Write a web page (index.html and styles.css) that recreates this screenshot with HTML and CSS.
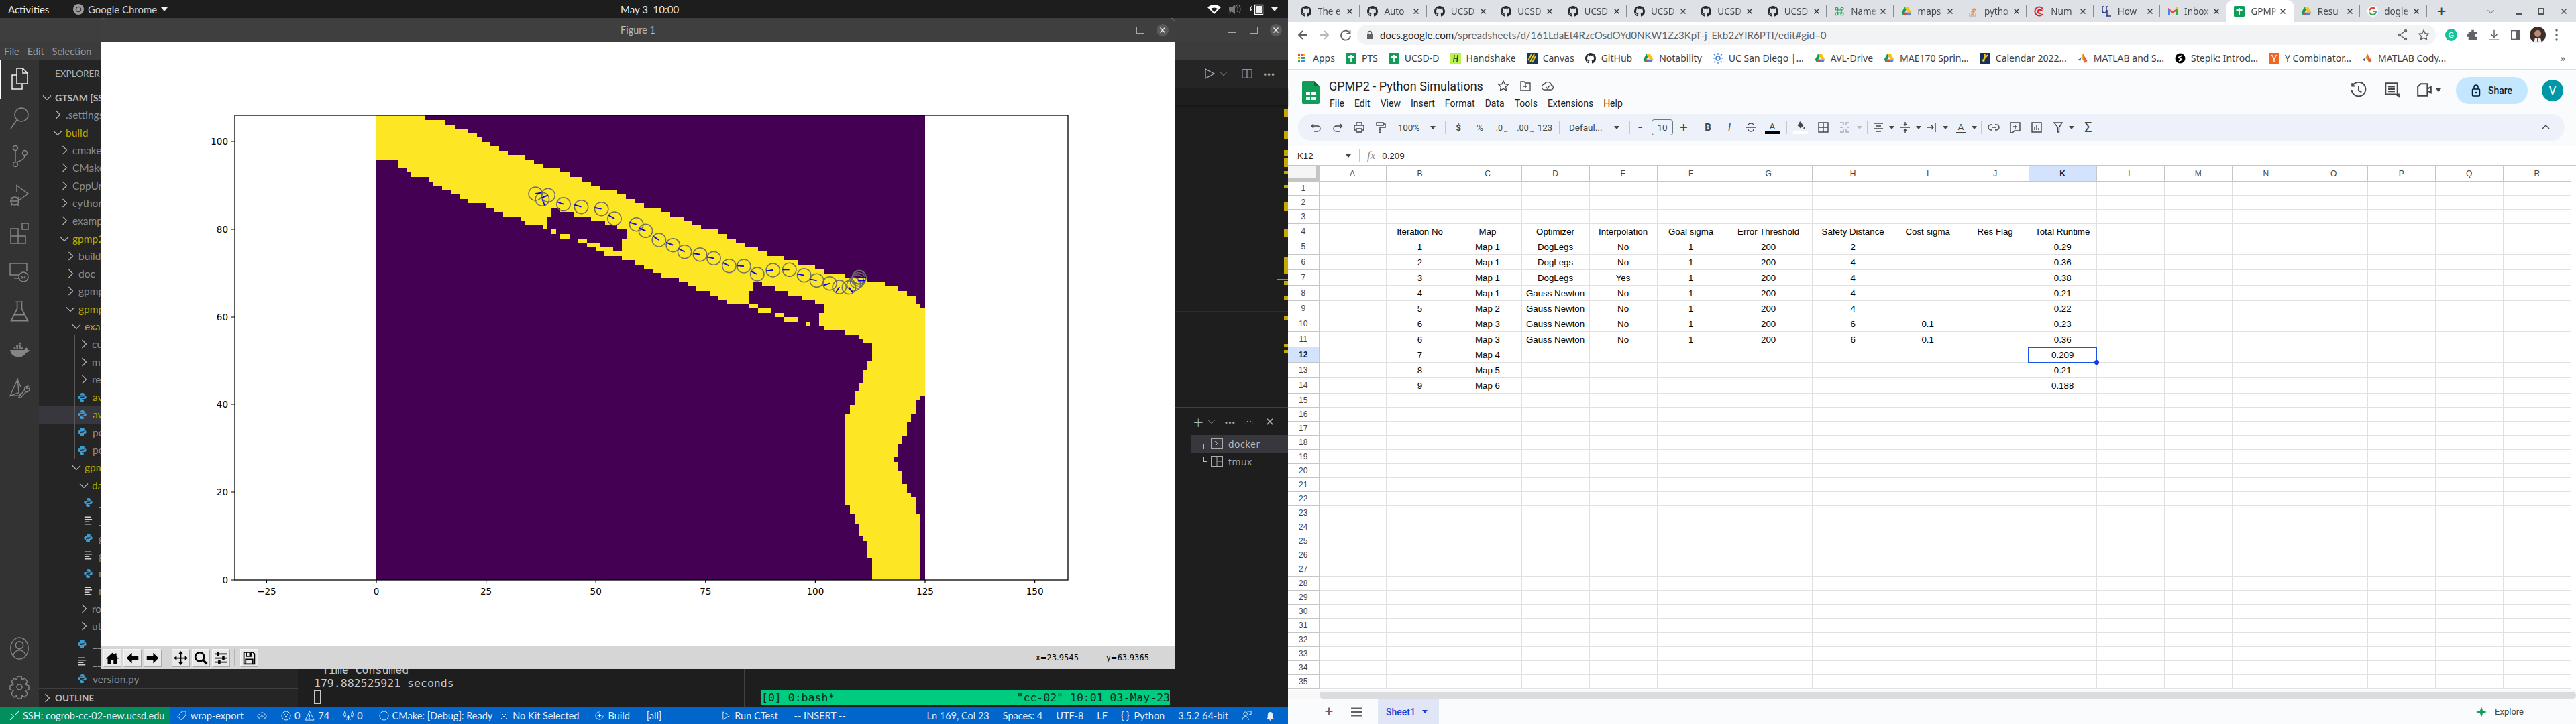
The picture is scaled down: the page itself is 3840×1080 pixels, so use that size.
FILE: index.html
```html
<!DOCTYPE html>
<html lang="en">
<head>
    <meta charset="UTF-8">
    <title>Desktop</title>
    <link rel="stylesheet" href="styles.css">
</head>
<body>
<svg class="defs" aria-hidden="true">
    <symbol id="gh" viewBox="0 0 16 16"><path fill="currentColor" d="M8 0C3.58 0 0 3.58 0 8c0 3.54 2.29 6.53 5.47 7.59.4.07.55-.17.55-.38 0-.19-.01-.82-.01-1.49-2.01.37-2.53-.49-2.69-.94-.09-.23-.48-.94-.82-1.13-.28-.15-.68-.52-.01-.53.63-.01 1.08.58 1.23.82.72 1.21 1.87.87 2.33.66.07-.52.28-.87.51-1.07-1.78-.2-3.64-.89-3.64-3.95 0-.87.31-1.59.82-2.15-.08-.2-.36-1.02.08-2.12 0 0 .67-.21 2.2.82.64-.18 1.32-.27 2-.27s1.36.09 2 .27c1.53-1.04 2.2-.82 2.2-.82.44 1.1.16 1.92.08 2.12.51.56.82 1.27.82 2.15 0 3.07-1.87 3.75-3.65 3.95.29.25.54.73.54 1.48 0 1.07-.01 1.93-.01 2.2 0 .21.15.46.55.38A8.013 8.013 0 0016 8c0-4.42-3.58-8-8-8z"/></symbol>
    <symbol id="drive" viewBox="0 0 24 24"><path fill="#0f9d58" d="M8 2 1 14.5 4.5 21l7-12.5z"/><path fill="#ffc107" d="M8 2h8l7 12.5h-8z"/><path fill="#4285f4" d="M4.5 21h15l3.5-6.5H8z"/><path fill="#ea4335" d="M4.5 21h6l3-6.5H8z"/></symbol>
    <symbol id="gsheet" viewBox="0 0 16 16"><rect width="16" height="16" rx="1.5" fill="#0f9d58"/><path fill="none" stroke="#fff" stroke-width="1.8" d="M8 3v11M3.5 6h9"/></symbol>
    <symbol id="matlab" viewBox="0 0 24 24"><path fill="#e16737" d="M12 2 8 11l5 6 3 5 6-4z"/><path fill="#f8b020" d="M12 2 8 11l5 6z"/><path fill="#1f5fa8" d="M8 11 1 15l5 3z"/></symbol>
    <symbol id="cx" viewBox="0 0 12 12"><path fill="none" stroke="currentColor" stroke-width="1.4" d="M2.5 2.5l7 7M9.5 2.5l-7 7"/></symbol>
    <symbol id="cr" viewBox="0 0 16 16"><path fill="none" stroke="currentColor" stroke-width="1.1" d="M5.5 2l6 6-6 6"/></symbol>
    <symbol id="cd" viewBox="0 0 16 16"><path fill="none" stroke="currentColor" stroke-width="1.1" d="M2 5.5l6 6 6-6"/></symbol>
    <symbol id="py" viewBox="0 0 24 24"><g fill="#3c9bd0"><path id="py-half" d="M12 1.5C8 1.5 8 3.2 8 4.5V7h4.2v1H5.5C3.5 8 2 9.5 2 12s1.4 4 3.3 4H7v-2.4c0-1.9 1.6-3.4 3.5-3.4h4c1.5 0 2.8-1.2 2.8-2.8V4.5c0-1.6-1.5-3-5.3-3z"/><path transform="rotate(180 12 12)" d="M12 1.5C8 1.5 8 3.2 8 4.5V7h4.2v1H5.5C3.5 8 2 9.5 2 12s1.4 4 3.3 4H7v-2.4c0-1.9 1.6-3.4 3.5-3.4h4c1.5 0 2.8-1.2 2.8-2.8V4.5c0-1.6-1.5-3-5.3-3z"/></g></symbol>
    <symbol id="lines" viewBox="0 0 16 16"><path fill="none" stroke="#d0d0d0" stroke-width="1.6" d="M2 2.5h10M2 6.2h12M2 9.8h8M2 13.5h11"/></symbol>
</svg>

<div class="desktop">
    <div class="screen">
        <div class="topbar">
            <span class="activities">Activities</span>
            <span class="appmenu">
                <svg class="appicon" viewBox="0 0 16 16"><circle cx="8" cy="8" r="8" fill="#9a9a9a"/><circle cx="8" cy="8" r="3.6" fill="none" stroke="#333" stroke-width="1.4"/></svg>
                Google Chrome <i class="caret-w"></i>
            </span>
            <span class="clock">May 3&nbsp; 10:00</span>
            <span class="tray">
                <svg viewBox="0 0 20 16" width="20" height="16"><path fill="#fff" d="M0 5q10-8 20 0l-10 10zM5 7q5-3 10 0l-5 5z" fill-rule="evenodd"/></svg>
                <svg viewBox="0 0 20 16" width="20" height="16"><path fill="#777" d="M1 5h4l5-4v14l-5-4H1z"/><path fill="none" stroke="#777" stroke-width="1.2" d="M13 4q3 4 0 8M16 2q4 6 0 12M1 14 14 1"/></svg>
                <svg viewBox="0 0 22 18" width="22" height="18"><path fill="#ddd" d="M4 3 0 9h2l-1 5 4-6H3z"/><rect x="8.5" y="2.5" width="12" height="14" fill="none" stroke="#fff" stroke-width="1.4"/><rect x="10" y="4" width="9" height="11" fill="#eee"/></svg>
                <i class="caret-w"></i>
            </span>
        </div>

        <div class="vscode">
            <div class="wintitle">
                <span class="winbtn min"></span>
                <span class="winbtn max"></span>
                <span class="winbtn close"><svg width="12" height="12"><use href="#cx"/></svg></span>
            </div>
            <div class="menubar"><span>File</span><span>Edit</span><span>Selection</span></div>
            <div class="workbench">
                <div class="activitybar">
                    <div class="act on"><svg viewBox="0 0 26 34"><path d="M9 1h9l7 7v16H9zM18 1v7h7M9 11H2v21h15v-8" /></svg></div>
                    <div class="act"><svg viewBox="0 0 30 34"><circle cx="18" cy="12" r="10"/><path d="M11 20 2 33"/></svg></div>
                    <div class="act"><svg viewBox="0 0 26 34"><circle cx="7" cy="5" r="3.5"/><circle cx="7" cy="29" r="3.5"/><circle cx="21" cy="12" r="3.5"/><path d="M7 9v16M21 16q0 6-12 10"/></svg></div>
                    <div class="act"><svg viewBox="0 0 30 34"><path d="M10 2l18 13-14 10M11 12v-8"/><circle cx="8" cy="26" r="6"/><path d="M2 20l3 3M14 20l-3 3M1 26h14M2 33l3-3M14 33l-3-3"/></svg></div>
                    <div class="act"><svg viewBox="0 0 30 34"><path d="M2 9h11v22H2zM2 20h22v11H13M19 1h9v9h-9z"/></svg></div>
                    <div class="act"><svg viewBox="0 0 30 30"><path d="M15 18H1V1h25v11M7 23h8"/><circle cx="21" cy="21" r="7"/><path d="M18 20l2 2-2 1M24 20l-2 2 2 1"/></svg></div>
                    <div class="act"><svg viewBox="0 0 26 30"><path d="M8 2h10M10 2v9L2 27h22l-8-16V2M6 19h14"/></svg></div>
                    <div class="act"><svg viewBox="0 0 32 24"><path class="solid" d="M1 12h23q1-3 3-4 3 2 3 4 2 .2 2 1-2 3-5 3-4 7-12 7Q3 23 1 12z"/><path class="solid" d="M7 8h3v3H7zM11 8h3v3h-3zM15 8h3v3h-3zM11 4h3v3h-3zM15 4h3v3h-3zM15 0h3v3h-3zM19 8h3v3h-3z"/></svg></div>
                    <div class="act"><svg viewBox="0 0 32 32"><path d="M13 1 1 27l14-5zM13 1l5 12M1 27h14l3-4"/><path d="M15 29l9-11a5 5 0 0 1 6-6l-3 3 2 2 3-2a5 5 0 0 1-6 6l-8 9z"/></svg></div>
                    <div class="act-space"></div>
                    <div class="act"><svg viewBox="0 0 30 36"><ellipse cx="15" cy="18" rx="14" ry="17"/><circle cx="15" cy="13" r="6"/><path d="M5 30q2-9 10-9t10 9"/></svg></div>
                    <div class="act"><svg viewBox="0 0 30 34"><path d="M12 1h6l1 5 4-2 4 5-3 4 5 2v6l-5 1 3 5-4 5-4-3-1 5h-6l-1-5-4 3-4-5 3-5-5-1v-6l5-2-3-4 4-5 4 2z"/><circle cx="15" cy="17" r="4"/></svg></div>
                </div>

                <div class="sidebar">
                    <div class="side-title">EXPLORER</div>
                    <div class="tree">
                        <div class="row d0 root"><svg class="chev"><use href="#cd"/></svg><span>GTSAM [SSH: cogrob]</span></div>
                        <div class="row d1"><svg class="chev"><use href="#cr"/></svg><span>.settings</span></div>
                        <div class="row d1 mod"><svg class="chev"><use href="#cd"/></svg><span>build</span></div>
                        <div class="row d2"><svg class="chev"><use href="#cr"/></svg><span>cmake</span></div>
                        <div class="row d2"><svg class="chev"><use href="#cr"/></svg><span>CMakeFiles</span></div>
                        <div class="row d2"><svg class="chev"><use href="#cr"/></svg><span>CppUnit</span></div>
                        <div class="row d2"><svg class="chev"><use href="#cr"/></svg><span>cython</span></div>
                        <div class="row d2"><svg class="chev"><use href="#cr"/></svg><span>examples</span></div>
                        <div class="row d2 mod"><svg class="chev"><use href="#cd"/></svg><span>gpmp2</span></div>
                        <div class="row d3"><svg class="chev"><use href="#cr"/></svg><span>build</span></div>
                        <div class="row d3"><svg class="chev"><use href="#cr"/></svg><span>doc</span></div>
                        <div class="row d3"><svg class="chev"><use href="#cr"/></svg><span>gpmp2</span></div>
                        <div class="row d3 mod"><svg class="chev"><use href="#cd"/></svg><span>gpmp2_python</span></div>
                        <div class="row d4 mod"><svg class="chev"><use href="#cd"/></svg><span>examples</span></div>
                        <div class="row d5 guide"><svg class="chev"><use href="#cr"/></svg><span>custom</span></div>
                        <div class="row d5 guide"><svg class="chev"><use href="#cr"/></svg><span>maps</span></div>
                        <div class="row d5 guide"><svg class="chev"><use href="#cr"/></svg><span>results</span></div>
                        <div class="row f5 mod guide"><svg class="file"><use href="#py"/></svg><span>avoid.py</span></div>
                        <div class="row f5 mod guide picked"><svg class="file"><use href="#py"/></svg><span>avoid2.py</span></div>
                        <div class="row f5 guide"><svg class="file"><use href="#py"/></svg><span>point.py</span></div>
                        <div class="row f5 guide"><svg class="file"><use href="#py"/></svg><span>point2.py</span></div>
                        <div class="row d4 mod"><svg class="chev"><use href="#cd"/></svg><span>gpmp2_python</span></div>
                        <div class="row d5 mod"><svg class="chev"><use href="#cd"/></svg><span>datasets</span></div>
                        <div class="row f6"><svg class="file"><use href="#py"/></svg><span>__init__.py</span></div>
                        <div class="row f6"><svg class="file"><use href="#lines"/></svg><span>__init__.pyc</span></div>
                        <div class="row f6"><svg class="file"><use href="#py"/></svg><span>generate.py</span></div>
                        <div class="row f6"><svg class="file"><use href="#lines"/></svg><span>generate.pyc</span></div>
                        <div class="row f6"><svg class="file"><use href="#py"/></svg><span>maps.py</span></div>
                        <div class="row f6"><svg class="file"><use href="#lines"/></svg><span>maps.pyc</span></div>
                        <div class="row d5"><svg class="chev"><use href="#cr"/></svg><span>robots</span></div>
                        <div class="row d5"><svg class="chev"><use href="#cr"/></svg><span>utils</span></div>
                        <div class="row f5"><svg class="file"><use href="#py"/></svg><span>__init__.py</span></div>
                        <div class="row f5"><svg class="file"><use href="#lines"/></svg><span>__init__.pyc</span></div>
                        <div class="row f5"><svg class="file"><use href="#py"/></svg><span>version.py</span></div>
                    </div>
                    <div class="outline"><svg class="chev"><use href="#cr"/></svg><span>OUTLINE</span></div>
                </div>

                <div class="main">
                    <div class="tabsrow">
                        <svg class="ed-ico" viewBox="0 0 18 18" width="18" height="18"><path d="M3 2l13 7-13 7z"/></svg>
                        <svg class="ed-small" width="12" height="12"><use href="#cd"/></svg>
                        <svg class="ed-ico split" viewBox="0 0 18 18" width="18" height="16"><rect x="1" y="2" width="16" height="14" rx="1"/><path d="M9 2v14"/></svg>
                        <span class="dots">···</span>
                    </div>
                    <div class="crumbs"></div>
                    <div class="editor">
                        <div class="overview">
                            <i class="mk m1"></i><i class="mk m2"></i><i class="mk m3"></i><i class="mk m4"></i><i class="mk m5"></i><i class="mk m6"></i><i class="mk m7"></i><i class="mk m8"></i><i class="mk m9"></i><i class="mk m10"></i><i class="mk m11"></i><i class="mk m12"></i><i class="mk m13"></i><i class="mk m14"></i>
                        </div>
                    </div>
                    <div class="panel">
                        <div class="panel-head">
                            <span class="plus">+</span>
                            <svg class="pico" width="12" height="12"><use href="#cd"/></svg>
                            <span class="dots pd">···</span>
                            <svg class="pico up" width="14" height="14"><use href="#cd"/></svg>
                            <svg class="pico px" width="14" height="14"><use href="#cx"/></svg>
                        </div>
                        <div class="panel-body">
                            <div class="term">
                                <div class="tl ind">Time Consumed</div>
                                <div class="tl">179.882525921 seconds</div>
                                <div class="tl"><span class="cursor"></span></div>
                            </div>
                            <div class="term tmux">
                                <div class="tmuxbar"><span>[0] 0:bash*</span><span>"cc-02" 10:01 03-May-23</span></div>
                            </div>
                            <div class="termlist">
                                <div class="tt on"><span class="tree-l top"></span><svg viewBox="0 0 18 16" width="18" height="16"><rect x=".5" y=".5" width="17" height="15"/><path d="M6 4l4 4-4 4"/></svg><span>docker</span></div>
                                <div class="tt"><span class="tree-l"></span><svg viewBox="0 0 18 16" width="18" height="16"><rect x=".5" y=".5" width="17" height="15"/><path d="M9 1v14M9 8h8"/></svg><span>tmux</span></div>
                            </div>
                        </div>
                    </div>
                </div>
            </div>
            <div class="statusbar">
                <div class="remote">
                    <svg viewBox="0 0 14 14" width="14" height="14"><path d="M1 13l5-5-3-3M13 1L8 6"/></svg>
                    <span>SSH: cogrob-cc-02-new.ucsd.edu</span>
                </div>
                <div class="st s-branch"><svg viewBox="0 0 16 16"><path d="M8 1h6v6l-7 8-6-6z"/></svg><span>wrap-export</span></div>
                <div class="st s-cloud"><svg viewBox="0 0 16 16"><path d="M5 12H4a3 3 0 0 1 0-6 4.500 4.500 0 0 1 8.500 0 3 3 0 0 1-1 6H11M8 15V8M5.500 10 8 7.500 10.500 10"/></svg></div>
                <div class="st s-err"><svg viewBox="0 0 16 16"><circle cx="8" cy="8" r="7"/><path d="M5.500 5.500l5 5M10.500 5.500l-5 5"/></svg><span>0</span></div>
                <div class="st s-warn"><svg viewBox="0 0 16 16"><path d="M8 1l7 14H1zM8 6v5M8 12v1.500"/></svg><span>74</span></div>
                <div class="st s-radio"><svg viewBox="0 0 16 16"><path d="M8 8v7M8 8 5 15M8 8l3 7M4 3q-2 3 0 6M12 3q2 3 0 6M2 1q-3 5 0 10M14 1q3 5 0 10"/></svg><span>0</span></div>
                <div class="st s-info"><svg viewBox="0 0 16 16"><circle cx="8" cy="8" r="7"/><path d="M8 7v5M8 4v1.500"/></svg><span>CMake: [Debug]: Ready</span></div>
                <div class="st s-kit"><svg viewBox="0 0 16 16"><path d="M3 3l10 10M13 3 3 13"/></svg><span>No Kit Selected</span></div>
                <div class="st s-build"><svg viewBox="0 0 16 16"><path d="M8 2a6 6 0 1 0 6 6M8 5v6M5 8h6"/></svg><span>Build</span></div>
                <div class="st s-all"><span>[all]</span></div>
                <div class="st s-run"><svg viewBox="0 0 16 16"><path d="M3 2l10 6-10 6z"/></svg><span>Run CTest</span></div>
                <div class="st s-ins"><span>-- INSERT --</span></div>
                <div class="st-space"></div>
                <div class="st s-ln"><span>Ln 169, Col 23</span></div>
                <div class="st s-sp"><span>Spaces: 4</span></div>
                <div class="st s-enc"><span>UTF-8</span></div>
                <div class="st s-lf"><span>LF</span></div>
                <div class="st s-py"><span>{ }</span><span class="lang">Python</span></div>
                <div class="st s-ver"><span>3.5.2 64-bit</span></div>
                <div class="st s-fb"><svg viewBox="0 0 16 16"><circle cx="6" cy="5" r="3"/><path d="M1 15q1-6 5-6t5 6M9 1h6v5h-3"/></svg></div>
                <div class="st s-bell"><svg viewBox="0 0 16 16"><path class="solid" d="M8 2q4 0 4 5v4l2 2H2l2-2V7q0-5 4-5zM6 14h4l-2 2z"/></svg></div>
            </div>
        </div>

        <div class="figure">
            <div class="figtitle">
                <span>Figure 1</span>
                <span class="winbtn fig-min"></span>
                <span class="winbtn max"></span>
                <span class="winbtn close"><svg width="12" height="12"><use href="#cx"/></svg></span>
            </div>
            <svg class="plot" viewBox="150 63 1601 901" width="1601" height="901">
                <rect x="561" y="172" width="818" height="693" fill="#440154"/>
                <g class="map-y" fill="#fde725">
                    <polygon points="561,172 633,172 633,179 641,179 641,271 641,264 613,264 613,257 607,257 607,251 594,251 594,238 561,238"/>
                    <g transform="translate(640,150) scale(.5102,.33333)">
                        <polygon points="0,87 48,87 48,107 76,107 76,125 114,125 114,147 140,147 140,165 153,165 153,185 178,185 178,204 204,204 204,225 229,225 229,243 280,243 280,264 306,264 306,282 331,282 331,303 382,303 382,321 410,321 410,342 447,342 447,363 472,363 472,381 498,381 498,402 549,402 549,420 575,420 575,441 602,441 602,459 627,459 627,480 678,480 678,498 704,498 704,519 743,519 743,537 768,537 768,558 794,558 794,576 845,576 845,597 870,597 870,618 896,618 896,636 921,636 921,657 960,657 960,675 986,675 986,696 1037,696 1037,714 1076,714 1076,735 1127,735 1127,753 1152,753 1152,774 1215,774 1215,792 1280,792 1280,813 1331,813 1331,831 1370,831 1370,852 1396,852 1396,873 1421,873 1421,912 1435,912 1435,930 1448,930 1448,1200 1280,1200 1280,1167 1294,1167 1294,1086 1268,1086 1268,1068 1254,1068 1254,1047 1215,1047 1215,1029 1152,1029 1152,1008 1139,1008 1139,951 1152,951 1152,912 1127,912 1127,891 1088,891 1088,873 1049,873 1049,852 1011,852 1011,831 972,831 972,813 947,813 947,852 935,852 935,912 870,912 870,891 845,891 845,873 819,873 819,852 780,852 780,831 755,831 755,813 729,813 729,792 678,792 678,771 653,771 653,753 627,753 627,735 602,735 602,714 563,714 563,618 576,618 576,576 549,576 549,558 513,558 513,537 472,537 472,519 421,519 421,498 382,498 382,480 357,480 357,519 345,519 345,576 331,576 331,558 280,558 280,537 268,537 268,519 216,519 216,498 190,498 190,480 165,480 165,459 114,459 114,441 88,441 88,420 63,420 63,402 37,402 37,381 12,381 12,363 0,363"/>
                        <rect x="357" y="576" width="13" height="21"/>
                        <rect x="382" y="597" width="28" height="21"/>
                        <rect x="435" y="618" width="25" height="18"/>
                        <rect x="460" y="636" width="38" height="21"/>
                        <rect x="486" y="657" width="51" height="18"/>
                        <rect x="512" y="675" width="52" height="21"/>
                        <rect x="935" y="912" width="25" height="18"/>
                        <rect x="960" y="930" width="38" height="21"/>
                        <rect x="1011" y="951" width="26" height="18"/>
                        <rect x="1037" y="969" width="39" height="21"/>
                        <rect x="1102" y="990" width="11" height="18"/>
                    </g>
                    <g transform="translate(1100,350) scale(.33333)">
                        <polygon points="579,590 837,590 837,722 816,722 816,741 795,741 795,801 774,801 774,840 756,840 756,900 735,900 735,939 717,939 717,996 696,996 696,1017 717,1017 717,1056 735,1056 735,1116 756,1116 756,1155 774,1155 774,1173 795,1173 795,1251 816,1251 816,1545 600,1545 600,1449 579,1449 579,1371 561,1371 561,1350 540,1350 540,1293 522,1293 522,1251 501,1251 501,1212 480,1212 480,801 501,801 501,762 522,762 522,702 540,702 540,663 561,663 561,606 579,606"/>
                    </g>
                </g>
                <g transform="translate(640,150) scale(.5102,.33333)">
                    <g class="robot">
                        <ellipse cx="310" cy="417" rx="20" ry="30"/><ellipse cx="347" cy="424" rx="20" ry="30"/><ellipse cx="330" cy="442" rx="20" ry="30"/><ellipse cx="392" cy="464" rx="20" ry="30"/><ellipse cx="444" cy="476" rx="20" ry="30"/><ellipse cx="503" cy="485" rx="20" ry="30"/><ellipse cx="541" cy="528" rx="20" ry="30"/><ellipse cx="605" cy="554" rx="20" ry="30"/><ellipse cx="632" cy="583" rx="20" ry="30"/><ellipse cx="671" cy="624" rx="20" ry="30"/><ellipse cx="712" cy="647" rx="20" ry="30"/><ellipse cx="746" cy="677" rx="20" ry="30"/><ellipse cx="791" cy="689" rx="20" ry="30"/><ellipse cx="831" cy="706" rx="20" ry="30"/><ellipse cx="876" cy="740" rx="20" ry="30"/><ellipse cx="919" cy="741" rx="20" ry="30"/><ellipse cx="958" cy="777" rx="20" ry="30"/><ellipse cx="1004" cy="759" rx="20" ry="30"/><ellipse cx="1052" cy="757" rx="20" ry="30"/><ellipse cx="1095" cy="782" rx="20" ry="30"/><ellipse cx="1132" cy="805" rx="20" ry="30"/><ellipse cx="1170" cy="818" rx="20" ry="30"/><ellipse cx="1198" cy="834" rx="20" ry="30"/><ellipse cx="1226" cy="836" rx="20" ry="30"/><ellipse cx="1240" cy="822" rx="20" ry="30"/><ellipse cx="1250" cy="810" rx="20" ry="30"/><ellipse cx="1254" cy="800" rx="20" ry="30"/><ellipse cx="1256" cy="792" rx="20" ry="30"/><ellipse cx="1256" cy="790" rx="20" ry="30"/>
                    </g>
                    <path class="heading" d="M310 417l18-4M347 424l-20 12M330 442l7 28M372 453l20 11M424 467l20 9M483 480l20 5M523 512l18 16M585 545l20 9M614 571l18 12M653 606l18 18M692 635l20 12M728 663l18 14M771 684l20 5M811 700l20 6M858 726l18 14M899 739l20 2M939 763l19 14M984 763l20-4M1032 757h20M1075 776l20 6M1112 799l20 6M1152 827l18-9M1188 858l10-24M1238 860l-12-24M1252 806h20M1252 793l24-3"/>
                </g>
                <rect class="axes" x="350" y="172" width="1242" height="693"/>
                <path class="ticks" d="M397.400 865v5M561 865v5M724.600 865v5M888.200 865v5M1051.800 865v5M1215.400 865v5M1379 865v5M1542.600 865v5M350 865h-5M350 734h-5M350 603h-5M350 473h-5M350 342h-5M350 211h-5"/>
                <g class="ticklabels xt">
                    <text x="397.400" y="887">−25</text><text x="561" y="887">0</text><text x="724.600" y="887">25</text><text x="888.200" y="887">50</text><text x="1051.800" y="887">75</text><text x="1215.400" y="887">100</text><text x="1379" y="887">125</text><text x="1542.600" y="887">150</text>
                </g>
                <g class="ticklabels yt">
                    <text x="340" y="870">0</text><text x="340" y="739">20</text><text x="340" y="608">40</text><text x="340" y="478">60</text><text x="340" y="347">80</text><text x="340" y="216">100</text>
                </g>
            </svg>
            <div class="figbar">
                <button class="mb"><svg viewBox="0 0 24 24"><path class="k" d="M12 3 1 13h3v9h6v-6h4v6h6v-9h3l-4-4V4h-3v2z"/></svg></button>
                <button class="mb"><svg viewBox="0 0 24 24"><path class="k" d="M11 3 2 12l9 9v-6h11V9H11z"/></svg></button>
                <button class="mb"><svg viewBox="0 0 24 24"><path class="k" d="M13 3l9 9-9 9v-6H2V9h11z"/></svg></button>
                <span class="mb-sep"></span>
                <button class="mb"><svg viewBox="0 0 24 24"><path class="k" d="M12 0l4 5h-3v6h6V8l5 4-5 4v-3h-6v6h3l-4 5-4-5h3v-6H5v3l-5-4 5-4v3h6V5H8z"/></svg></button>
                <button class="mb"><svg viewBox="0 0 24 24"><circle cx="10" cy="10" r="7.500" fill="none" stroke="#000" stroke-width="3"/><path stroke="#000" stroke-width="4" d="M15 15l7 7"/></svg></button>
                <button class="mb"><svg viewBox="0 0 24 24"><path stroke="#000" stroke-width="2" d="M2 5h20M2 12h20M2 19h20"/><path class="k" d="M5 2h4v6H5zM14 9h4v6h-4zM7 16h4v6H7z"/></svg></button>
                <span class="mb-sep"></span>
                <button class="mb"><svg viewBox="0 0 24 24"><path fill="none" stroke="#000" stroke-width="2" d="M3 2h15l3 3v17H3zM7 2v7h9V2M6 22v-8h12v8"/><path class="k" d="M12 3h3v5h-3z"/></svg></button>
                <span class="coords">x=23.9545</span>
                <span class="coords cy">y=63.9365</span>
            </div>
        </div>
    </div>

    <div class="chrome">
        <div class="tabstrip">
            <div class="tab"><svg class="fav"><use href="#gh"/></svg><span class="tt-name">The e</span><svg class="tx"><use href="#cx"/></svg></div>
            <div class="tab"><svg class="fav"><use href="#gh"/></svg><span class="tt-name">Auto</span><svg class="tx"><use href="#cx"/></svg></div>
            <div class="tab"><svg class="fav"><use href="#gh"/></svg><span class="tt-name">UCSD</span><svg class="tx"><use href="#cx"/></svg></div>
            <div class="tab"><svg class="fav"><use href="#gh"/></svg><span class="tt-name">UCSD</span><svg class="tx"><use href="#cx"/></svg></div>
            <div class="tab"><svg class="fav"><use href="#gh"/></svg><span class="tt-name">UCSD</span><svg class="tx"><use href="#cx"/></svg></div>
            <div class="tab"><svg class="fav"><use href="#gh"/></svg><span class="tt-name">UCSD</span><svg class="tx"><use href="#cx"/></svg></div>
            <div class="tab"><svg class="fav"><use href="#gh"/></svg><span class="tt-name">UCSD</span><svg class="tx"><use href="#cx"/></svg></div>
            <div class="tab"><svg class="fav"><use href="#gh"/></svg><span class="tt-name">UCSD</span><svg class="tx"><use href="#cx"/></svg></div>
            <div class="tab"><svg class="fav" viewBox="0 0 16 16"><path fill="none" stroke="#1a9f5a" stroke-width="1.2" d="M3 6h10M3 10h10M5 6a2 2 0 1 0-2 0M11 6a2 2 0 1 1 2 0M5 10a2 2 0 1 1-2 0M11 10a2 2 0 1 0 2 0M5 4v8M11 4v8"/></svg><span class="tt-name">Name</span><svg class="tx"><use href="#cx"/></svg></div>
            <div class="tab"><svg class="fav"><use href="#drive"/></svg><span class="tt-name">maps</span><svg class="tx"><use href="#cx"/></svg></div>
            <div class="tab"><svg class="fav" viewBox="0 0 16 16"><path fill="none" stroke="#bcbbbb" stroke-width="1.4" d="M3 10v5h9v-5"/><path fill="none" stroke="#f48024" stroke-width="1.4" d="M5 13h5M5 10.500l5 .5M5.500 8l5 1.500M7 5l4 3M9 2.500l3 4"/></svg><span class="tt-name">pytho</span><svg class="tx"><use href="#cx"/></svg></div>
            <div class="tab"><svg class="fav" viewBox="0 0 16 16"><path fill="none" stroke="#e0242a" stroke-width="2" d="M13 12A6.500 6.500 0 1 1 13 4M5 8q3-4 6-2-4 1-6 2 2 4 6 3"/></svg><span class="tt-name">Num</span><svg class="tx"><use href="#cx"/></svg></div>
            <div class="tab"><svg class="fav" viewBox="0 0 16 16"><path fill="none" stroke="#2b3a82" stroke-width="1.5" d="M2 1v6q0 3 3 3t3-3V1M1 1h3M7 1h3M9 7v8h6M8 15h3M8 7h3"/></svg><span class="tt-name">How</span><svg class="tx"><use href="#cx"/></svg></div>
            <div class="tab"><svg class="fav" viewBox="0 0 16 16"><path fill="#ea4335" d="M1 3l7 5 7-5v3L8 11 1 6z"/><path fill="#4285f4" d="M1 4h3v10H1z"/><path fill="#34a853" d="M12 4h3v10h-3z"/><path fill="#fbbc04" d="M13 2h2v2h-2z"/></svg><span class="tt-name">Inbox</span><svg class="tx"><use href="#cx"/></svg></div>
            <div class="tab active"><svg class="fav"><use href="#gsheet"/></svg><span class="tt-name">GPMP</span><svg class="tx"><use href="#cx"/></svg></div>
            <div class="tab"><svg class="fav"><use href="#drive"/></svg><span class="tt-name">Resu</span><svg class="tx"><use href="#cx"/></svg></div>
            <div class="tab last"><svg class="fav" viewBox="0 0 16 16"><circle cx="8" cy="8" r="8" fill="#fff"/><path fill="none" stroke="#4285f4" stroke-width="2.200" d="M8 8h5a5 5 0 0 1-1.500 3.600"/><path fill="none" stroke="#34a853" stroke-width="2.200" d="M11.500 11.600A5 5 0 0 1 3.500 10"/><path fill="none" stroke="#fbbc04" stroke-width="2.200" d="M3.500 10a5 5 0 0 1 0-4"/><path fill="none" stroke="#ea4335" stroke-width="2.200" d="M3.500 6a5 5 0 0 1 8-2"/></svg><span class="tt-name">dogle</span><svg class="tx"><use href="#cx"/></svg></div>
            <span class="newtab">+</span>
            <span class="tab-space"></span>
            <svg class="wc wc-down"><use href="#cd"/></svg>
            <span class="wc-min"></span>
            <span class="wc-max"></span>
            <svg class="wc wc-x"><use href="#cx"/></svg>
        </div>

        <div class="addrrow">
            <svg class="nav" viewBox="0 0 18 18"><path d="M16 9H3M9 3 3 9l6 6"/></svg>
            <svg class="nav off" viewBox="0 0 18 18"><path d="M2 9h13M9 3l6 6-6 6"/></svg>
            <svg class="nav" viewBox="0 0 18 18"><path d="M15 6a7 7 0 1 0 1 4M15.500 2v5h-5"/></svg>
            <div class="omnibox">
                <svg class="lock" viewBox="0 0 12 14"><path fill="#5f6368" d="M2 6h8v7H2z"/><path fill="none" stroke="#5f6368" stroke-width="1.400" d="M3.500 6V4a2.500 2.500 0 0 1 5 0v2"/></svg>
                <span class="url"><b>docs.google.com</b>/spreadsheets/d/161LdaEt4RzcOsdOYd0NKW1Zz3KpT-j_Ekb2zYIR6PTI/edit#gid=0</span>
                <span class="tab-space"></span>
                <svg class="nav sm" viewBox="0 0 18 18"><path d="M14 3 5 9l9 6"/><circle cx="14" cy="3" r="1.500"/><circle cx="14" cy="15" r="1.500"/><circle cx="5" cy="9" r="1.500"/></svg>
                <svg class="nav sm" viewBox="0 0 18 18"><path d="M9 2l2.200 4.600 5 .7-3.600 3.500.9 5L9 13.400l-4.500 2.400.9-5L1.800 7.300l5-.7z"/></svg>
            </div>
            <svg class="ext" viewBox="0 0 20 20"><circle cx="10" cy="10" r="10" fill="#15c39a"/><text x="10" y="14.500" text-anchor="middle" class="grammarly">G</text></svg>
            <svg class="ext" viewBox="0 0 20 20"><path fill="#5f6368" d="M8 2h4v3h5v4h-2a2 2 0 0 0 0 4h2v5H3v-5H1V9h2V5h5z"/></svg>
            <svg class="ext nav" viewBox="0 0 20 20"><path d="M10 2v11M5 9l5 5 5-5M2 18h16"/></svg>
            <svg class="ext nav" viewBox="0 0 20 20"><rect x="3" y="3" width="14" height="14"/><path class="side" d="M11 3h6v14h-6z"/></svg>
            <svg class="ext face" viewBox="0 0 24 24"><circle cx="12" cy="12" r="12" fill="#3c2f2a"/><circle cx="12" cy="10" r="5" fill="#b98a74"/><path fill="#eee" d="M8 16h8l2 8H6z"/><path fill="#c33" d="M11 17h2v5h-2z"/></svg>
            <svg class="ext vdots" viewBox="0 0 6 20"><circle cx="3" cy="3" r="1.700"/><circle cx="3" cy="10" r="1.700"/><circle cx="3" cy="17" r="1.700"/></svg>
        </div>

        <div class="bookmarks">
            <div class="bm"><svg class="fav" viewBox="0 0 16 16"><path fill="#ea4335" d="M2 2h3v3H2zM6 2h3v3H6z"/><path fill="#fbbc04" d="M10 2h3v3h-3zM2 6h3v3H2z"/><path fill="#34a853" d="M6 6h3v3H6zM10 6h3v3h-3zM2 10h3v3H2z"/><path fill="#4285f4" d="M6 10h3v3H6zM10 10h3v3h-3z"/></svg><span>Apps</span></div>
            <div class="bm"><svg class="fav"><use href="#gsheet"/></svg><span>PTS</span></div>
            <div class="bm"><svg class="fav"><use href="#gsheet"/></svg><span>UCSD-D</span></div>
            <div class="bm"><svg class="fav" viewBox="0 0 16 16"><rect width="16" height="16" fill="#b8f24a"/><path stroke="#333" stroke-width="1.500" d="M6 3 5 13M11 3l-1 10M5 8h5"/></svg><span>Handshake</span></div>
            <div class="bm"><svg class="fav" viewBox="0 0 16 16"><rect width="16" height="16" fill="#0f3b63"/><path stroke="#f2c318" stroke-width="2" d="M5 13l6-11M8 14l5-9M2 11l5-9"/></svg><span>Canvas</span></div>
            <div class="bm"><svg class="fav"><use href="#gh"/></svg><span>GitHub</span></div>
            <div class="bm"><svg class="fav"><use href="#drive"/></svg><span>Notability</span></div>
            <div class="bm"><svg class="fav" viewBox="0 0 16 16"><circle cx="8" cy="8" r="3" fill="none" stroke="#3a7fe0" stroke-width="1.500"/><path stroke="#3a7fe0" stroke-width="1.200" d="M8 0v3M8 13v3M0 8h3M13 8h3M2 2l2 2M12 12l2 2M14 2l-2 2M2 14l2-2"/></svg><span>UC San Diego |...</span></div>
            <div class="bm"><svg class="fav"><use href="#drive"/></svg><span>AVL-Drive</span></div>
            <div class="bm"><svg class="fav"><use href="#drive"/></svg><span>MAE170 Sprin...</span></div>
            <div class="bm"><svg class="fav" viewBox="0 0 16 16"><rect width="16" height="16" fill="#14305e"/><path stroke="#f2c318" stroke-width="2" fill="none" d="M4 12l8-9M8 2 6 14"/></svg><span>Calendar 2022...</span></div>
            <div class="bm"><svg class="fav"><use href="#matlab"/></svg><span>MATLAB and S...</span></div>
            <div class="bm"><svg class="fav" viewBox="0 0 16 16"><circle cx="8" cy="8" r="7.500"/><path fill="none" stroke="#fff" stroke-width="2" d="M10.500 4 6 6.500 10 10 6 12"/></svg><span>Stepik: Introd...</span></div>
            <div class="bm"><svg class="fav" viewBox="0 0 16 16"><rect width="16" height="16" fill="#f26522"/><path stroke="#fff" fill="none" stroke-width="1.400" d="M4.500 3 8 9l3.500-6M8 9v4.500"/></svg><span>Y Combinator...</span></div>
            <div class="bm"><svg class="fav"><use href="#matlab"/></svg><span>MATLAB Cody...</span></div>
            <span class="tab-space"></span>
            <span class="bm-more">»</span>
        </div>

        <div class="sheets">
            <div class="docbar">
                <svg class="docicon" viewBox="0 0 26 34"><path fill="#0f9d58" d="M2 0h16l8 8v24a2 2 0 0 1-2 2H2a2 2 0 0 1-2-2V2a2 2 0 0 1 2-2z"/><path fill="#0a6b3c" d="M18 0l8 8h-8z"/><path fill="#fff" d="M6 16h14v12H6z"/><path stroke="#0f9d58" stroke-width="2" d="M13 16v12M6 22h14"/></svg>
                <div class="docinfo">
                    <div class="docname"><span class="doctitle">GPMP2 - Python Simulations</span>
                        <svg class="di" viewBox="0 0 18 18"><path d="M9 2l2.200 4.600 5 .7-3.600 3.500.9 5L9 13.400l-4.500 2.400.9-5L1.800 7.300l5-.7z"/></svg>
                        <svg class="di" viewBox="0 0 18 18"><path d="M2 3h5l2 2h7v11H2zM6 10h6M9 7v6"/></svg>
                        <svg class="di" viewBox="0 0 18 18"><path d="M5 15a4 4 0 0 1-1-8 5.500 5.500 0 0 1 10.500 1A3.500 3.500 0 0 1 13 15zM6.500 11l2 2 3.500-4"/></svg>
                    </div>
                    <div class="docmenu"><span>File</span><span>Edit</span><span>View</span><span>Insert</span><span>Format</span><span>Data</span><span>Tools</span><span>Extensions</span><span>Help</span></div>
                </div>
                <span class="tab-space"></span>
                <svg class="hd" viewBox="0 0 22 22"><path d="M3 5a9.500 9.500 0 1 1-1.500 6M2 2v4h4M11 6v6l4 2"/></svg>
                <svg class="hd" viewBox="0 0 22 22"><path d="M3 2h16v15h2v3l-4-3H3zM6.500 7h9M6.500 10h9M6.500 13h9"/></svg>
                <svg class="hd meet" viewBox="0 0 22 22"><path d="M2 7l4-4h9v16H2zM15 10l5-3v8l-5-3"/></svg>
                <i class="caret-g mc"></i>
                <div class="share"><svg viewBox="0 0 14 18" width="14" height="18"><rect x="1.500" y="7" width="11" height="10" rx="1" fill="none" stroke="#001d35" stroke-width="1.500"/><path d="M4 7V4a3 3 0 0 1 6 0v3" fill="none" stroke="#001d35" stroke-width="1.500"/><circle cx="7" cy="12" r="1.300" fill="#001d35"/></svg><span>Share</span></div>
                <div class="avatar">V</div>
            </div>
            <div class="toolbar">
                <span class="tb"><svg viewBox="0 0 18 18"><path d="M5 4 2.500 7 5 10M3 7h8a4 4 0 0 1 0 8H6"/></svg></span>
                <span class="tb"><svg viewBox="0 0 18 18"><path d="M13 4l2.500 3L13 10M15 7H7a4 4 0 0 0 0 8h5"/></svg></span>
                <span class="tb"><svg viewBox="0 0 18 18"><path d="M5 6V2h8v4M5 13H2V6h14v7h-3M5 11h8v5H5z"/></svg></span>
                <span class="tb"><svg viewBox="0 0 18 18"><path d="M3 2h10v4H3zM13 4h3v5H8v3M7 12h2v5H7z"/></svg></span>
                <span class="tb t w52">100%</span><span class="tb w20"><i class="caret-g"></i></span>
                <span class="sep s1"></span>
                <span class="tb t bold">$</span><span class="tb t">%</span>
                <span class="tb t w26 dec">.0<sub>←</sub></span><span class="tb t w44 dec">.00<sub>→</sub></span><span class="tb t w22">123</span>
                <span class="sep s2"></span>
                <span class="tb t w61">Defaul...</span><span class="tb w20"><i class="caret-g"></i></span>
                <span class="sep s3"></span>
                <span class="tb t w30">−</span><span class="fontsize">10</span><span class="tb t big">+</span>
                <span class="sep s0"></span>
                <span class="tb t bold ml3 fmt">B</span><span class="tb t fmt ital">I</span>
                <span class="tb"><svg viewBox="0 0 18 18"><path d="M2 9h14M5 6a4 3 0 0 1 8 0M5 12a4 3 0 0 0 8 0"/></svg></span>
                <span class="tb color"><span>A</span><i class="bar black"></i></span>
                <span class="sep s4"></span>
                <span class="tb color ml4"><svg viewBox="0 0 18 16"><path class="solid" d="M8 0l6 7-5 5-5-5z"/><path class="solid" d="M15 9q2 3 0 4-2-1 0-4z"/></svg><i class="bar white"></i></span>
                <span class="tb ml2"><svg viewBox="0 0 18 18"><path d="M2 2h14v14H2zM9 2v14M2 9h14"/></svg></span>
                <span class="tb dim"><svg viewBox="0 0 18 18"><path d="M2 2h5v4M16 2h-5v4M2 16h5v-4M16 16h-5v-4M2 9h4M12 9h4"/></svg></span>
                <span class="tb w12"><i class="caret-g faint"></i></span>
                <span class="sep s5"></span>
                <span class="tb"><svg viewBox="0 0 18 18"><path d="M2 3h14M5 7h8M2 11h14M5 15h8"/></svg></span><span class="tb w8"><i class="caret-g"></i></span>
                <span class="tb"><svg viewBox="0 0 18 18"><path d="M2 9h14M9 1v5M7 4l2 2 2-2M9 17v-5M7 14l2-2 2 2"/></svg></span><span class="tb w8"><i class="caret-g"></i></span>
                <span class="tb"><svg viewBox="0 0 18 18"><path d="M14 2v14M2 9h8M8 6l3 3-3 3"/></svg></span><span class="tb w8"><i class="caret-g"></i></span>
                <span class="tb ml3 color"><span>A</span><i class="bar thin"></i></span><span class="tb w8"><i class="caret-g"></i></span>
                <span class="sep s6"></span>
                <span class="tb ml2"><svg viewBox="0 0 18 18"><path d="M7 5H5a4 4 0 0 0 0 8h2M11 5h2a4 4 0 0 1 0 8h-2M6 9h6"/></svg></span>
                <span class="tb"><svg viewBox="0 0 18 18"><path d="M2 2h14v12h-8l-3 3H2zM9 5v6M6 8h6"/></svg></span>
                <span class="tb"><svg viewBox="0 0 18 18"><path d="M2 2h14v14H2zM6 13V9M9 13V5M12 13v-3"/></svg></span>
                <span class="tb"><svg viewBox="0 0 18 18"><path d="M3 2h12l-4.500 7v7h-2V9z"/></svg></span><span class="tb w8"><i class="caret-g"></i></span>
                <span class="tb ml5 t big">Σ</span>
                <span class="tab-space"></span>
                <span class="tb"><svg viewBox="0 0 18 18"><path d="M4 11l5-5 5 5"/></svg></span>
            </div>
            <div class="formula">
                <span class="namebox">K12</span><i class="caret-g"></i>
                <span class="fx-sep"></span>
                <span class="fx">fx</span>
                <span class="fx-val">0.209</span>
            </div>
            <div class="gridwrap">
                <table class="grid">
                    <colgroup>
                        <col class="c-h"><col class="c-a"><col><col><col><col><col><col class="c-g"><col class="c-gh"><col><col class="c-a"><col><col><col><col><col><col><col><col>
                    </colgroup>
                    <tr class="colhead"><th class="corner"></th><th>A</th><th>B</th><th>C</th><th>D</th><th>E</th><th>F</th><th>G</th><th>H</th><th>I</th><th>J</th><th class="hl">K</th><th>L</th><th>M</th><th>N</th><th>O</th><th>P</th><th>Q</th><th>R</th></tr>
                    <tr><th>1</th><td></td><td></td><td></td><td></td><td></td><td></td><td></td><td></td><td></td><td></td><td></td><td></td><td></td><td></td><td></td><td></td><td></td><td></td></tr>
                    <tr><th>2</th><td></td><td></td><td></td><td></td><td></td><td></td><td></td><td></td><td></td><td></td><td></td><td></td><td></td><td></td><td></td><td></td><td></td><td></td></tr>
                    <tr><th>3</th><td></td><td></td><td></td><td></td><td></td><td></td><td></td><td></td><td></td><td></td><td></td><td></td><td></td><td></td><td></td><td></td><td></td><td></td></tr>
                    <tr class="tall"><th>4</th><td></td><td>Iteration No</td><td>Map</td><td>Optimizer</td><td>Interpolation</td><td>Goal sigma</td><td>Error Threshold</td><td>Safety Distance</td><td>Cost sigma</td><td>Res Flag</td><td>Total Runtime</td><td></td><td></td><td></td><td></td><td></td><td></td><td></td></tr>
                    <tr class="tall"><th>5</th><td></td><td>1</td><td>Map 1</td><td>DogLegs</td><td>No</td><td>1</td><td>200</td><td>2</td><td></td><td></td><td>0.29</td><td></td><td></td><td></td><td></td><td></td><td></td><td></td></tr>
                    <tr class="tall"><th>6</th><td></td><td>2</td><td>Map 1</td><td>DogLegs</td><td>No</td><td>1</td><td>200</td><td>4</td><td></td><td></td><td>0.36</td><td></td><td></td><td></td><td></td><td></td><td></td><td></td></tr>
                    <tr class="tall"><th>7</th><td></td><td>3</td><td>Map 1</td><td>DogLegs</td><td>Yes</td><td>1</td><td>200</td><td>4</td><td></td><td></td><td>0.38</td><td></td><td></td><td></td><td></td><td></td><td></td><td></td></tr>
                    <tr class="tall"><th>8</th><td></td><td>4</td><td>Map 1</td><td>Gauss Newton</td><td>No</td><td>1</td><td>200</td><td>4</td><td></td><td></td><td>0.21</td><td></td><td></td><td></td><td></td><td></td><td></td><td></td></tr>
                    <tr class="tall"><th>9</th><td></td><td>5</td><td>Map 2</td><td>Gauss Newton</td><td>No</td><td>1</td><td>200</td><td>4</td><td></td><td></td><td>0.22</td><td></td><td></td><td></td><td></td><td></td><td></td><td></td></tr>
                    <tr class="tall"><th>10</th><td></td><td>6</td><td>Map 3</td><td>Gauss Newton</td><td>No</td><td>1</td><td>200</td><td>6</td><td>0.1</td><td></td><td>0.23</td><td></td><td></td><td></td><td></td><td></td><td></td><td></td></tr>
                    <tr class="tall"><th>11</th><td></td><td>6</td><td>Map 3</td><td>Gauss Newton</td><td>No</td><td>1</td><td>200</td><td>6</td><td>0.1</td><td></td><td>0.36</td><td></td><td></td><td></td><td></td><td></td><td></td><td></td></tr>
                    <tr class="tall"><th class="hl">12</th><td></td><td>7</td><td>Map 4</td><td></td><td></td><td></td><td></td><td></td><td></td><td></td><td class="cur">0.209</td><td></td><td></td><td></td><td></td><td></td><td></td><td></td></tr>
                    <tr class="tall"><th>13</th><td></td><td>8</td><td>Map 5</td><td></td><td></td><td></td><td></td><td></td><td></td><td></td><td>0.21</td><td></td><td></td><td></td><td></td><td></td><td></td><td></td></tr>
                    <tr class="tall"><th>14</th><td></td><td>9</td><td>Map 6</td><td></td><td></td><td></td><td></td><td></td><td></td><td></td><td>0.188</td><td></td><td></td><td></td><td></td><td></td><td></td><td></td></tr>
                    <tr><th>15</th><td></td><td></td><td></td><td></td><td></td><td></td><td></td><td></td><td></td><td></td><td></td><td></td><td></td><td></td><td></td><td></td><td></td><td></td></tr>
                    <tr><th>16</th><td></td><td></td><td></td><td></td><td></td><td></td><td></td><td></td><td></td><td></td><td></td><td></td><td></td><td></td><td></td><td></td><td></td><td></td></tr>
                    <tr><th>17</th><td></td><td></td><td></td><td></td><td></td><td></td><td></td><td></td><td></td><td></td><td></td><td></td><td></td><td></td><td></td><td></td><td></td><td></td></tr>
                    <tr><th>18</th><td></td><td></td><td></td><td></td><td></td><td></td><td></td><td></td><td></td><td></td><td></td><td></td><td></td><td></td><td></td><td></td><td></td><td></td></tr>
                    <tr><th>19</th><td></td><td></td><td></td><td></td><td></td><td></td><td></td><td></td><td></td><td></td><td></td><td></td><td></td><td></td><td></td><td></td><td></td><td></td></tr>
                    <tr><th>20</th><td></td><td></td><td></td><td></td><td></td><td></td><td></td><td></td><td></td><td></td><td></td><td></td><td></td><td></td><td></td><td></td><td></td><td></td></tr>
                    <tr><th>21</th><td></td><td></td><td></td><td></td><td></td><td></td><td></td><td></td><td></td><td></td><td></td><td></td><td></td><td></td><td></td><td></td><td></td><td></td></tr>
                    <tr><th>22</th><td></td><td></td><td></td><td></td><td></td><td></td><td></td><td></td><td></td><td></td><td></td><td></td><td></td><td></td><td></td><td></td><td></td><td></td></tr>
                    <tr><th>23</th><td></td><td></td><td></td><td></td><td></td><td></td><td></td><td></td><td></td><td></td><td></td><td></td><td></td><td></td><td></td><td></td><td></td><td></td></tr>
                    <tr><th>24</th><td></td><td></td><td></td><td></td><td></td><td></td><td></td><td></td><td></td><td></td><td></td><td></td><td></td><td></td><td></td><td></td><td></td><td></td></tr>
                    <tr><th>25</th><td></td><td></td><td></td><td></td><td></td><td></td><td></td><td></td><td></td><td></td><td></td><td></td><td></td><td></td><td></td><td></td><td></td><td></td></tr>
                    <tr><th>26</th><td></td><td></td><td></td><td></td><td></td><td></td><td></td><td></td><td></td><td></td><td></td><td></td><td></td><td></td><td></td><td></td><td></td><td></td></tr>
                    <tr><th>27</th><td></td><td></td><td></td><td></td><td></td><td></td><td></td><td></td><td></td><td></td><td></td><td></td><td></td><td></td><td></td><td></td><td></td><td></td></tr>
                    <tr><th>28</th><td></td><td></td><td></td><td></td><td></td><td></td><td></td><td></td><td></td><td></td><td></td><td></td><td></td><td></td><td></td><td></td><td></td><td></td></tr>
                    <tr><th>29</th><td></td><td></td><td></td><td></td><td></td><td></td><td></td><td></td><td></td><td></td><td></td><td></td><td></td><td></td><td></td><td></td><td></td><td></td></tr>
                    <tr><th>30</th><td></td><td></td><td></td><td></td><td></td><td></td><td></td><td></td><td></td><td></td><td></td><td></td><td></td><td></td><td></td><td></td><td></td><td></td></tr>
                    <tr><th>31</th><td></td><td></td><td></td><td></td><td></td><td></td><td></td><td></td><td></td><td></td><td></td><td></td><td></td><td></td><td></td><td></td><td></td><td></td></tr>
                    <tr><th>32</th><td></td><td></td><td></td><td></td><td></td><td></td><td></td><td></td><td></td><td></td><td></td><td></td><td></td><td></td><td></td><td></td><td></td><td></td></tr>
                    <tr><th>33</th><td></td><td></td><td></td><td></td><td></td><td></td><td></td><td></td><td></td><td></td><td></td><td></td><td></td><td></td><td></td><td></td><td></td><td></td></tr>
                    <tr><th>34</th><td></td><td></td><td></td><td></td><td></td><td></td><td></td><td></td><td></td><td></td><td></td><td></td><td></td><td></td><td></td><td></td><td></td><td></td></tr>
                    <tr><th>35</th><td></td><td></td><td></td><td></td><td></td><td></td><td></td><td></td><td></td><td></td><td></td><td></td><td></td><td></td><td></td><td></td><td></td><td></td></tr>
                </table>
            </div>
            <div class="hscroll"><span class="thumb"></span></div>
            <div class="sheetbar">
                <span class="sb-plus">+</span>
                <svg class="sb-all" viewBox="0 0 16 14"><path d="M0 1.500h16M0 7h16M0 12.500h16"/></svg>
                <div class="sheettab"><span>Sheet1</span><i class="caret-b"></i></div>
                <span class="tab-space"></span>
                <div class="explore"><svg viewBox="0 0 16 16" width="16" height="16"><path fill="#0f9d58" d="M8 0l2 6 6 2-6 2-2 6-2-6-6-2 6-2z"/></svg><span>Explore</span></div>
            </div>
        </div>
    </div>
</div>
</body>
</html>
```

FILE: styles.css
```css
* {
    box-sizing: border-box;
}
body {
    margin: 0;
    background: #1e1e1e;
    font-family: Lato, "Noto Sans", sans-serif;
}
.defs {
    position: absolute;
    width: 0;
    height: 0;
}
i {
    display: block;
}
.desktop {
    display: flex;
    width: 3840px;
    height: 1080px;
    overflow: hidden;
}

/* left half */
.screen {
    position: relative;
    width: 1920px;
    height: 1080px;
    display: flex;
    flex-direction: column;
    flex: none;
}
.topbar {
    position: relative;
    height: 27px;
    background: #1d1d1d;
    color: #e8e8e8;
    font-size: 15px;
    display: flex;
    align-items: center;
    padding-left: 12px;
}
.activities {
    width: 97px;
}
.appmenu {
    display: flex;
    align-items: center;
    gap: 6px;
    color: #cfcfcf;
}
.appicon {
    width: 16px;
    height: 16px;
    margin-left: 0;
}
.caret-w {
    width: 0;
    height: 0;
    border: 5px solid transparent;
    border-top: 6px solid #eee;
    border-bottom: 0;
}
.clock {
    position: absolute;
    left: 925px;
}
.tray {
    margin-left: auto;
    margin-right: 15px;
    display: flex;
    align-items: center;
    gap: 11px;
}
.vscode {
    flex: 1;
    display: flex;
    flex-direction: column;
    min-height: 0;
}
.wintitle {
    height: 36px;
    background: #3e3e3e;
    display: flex;
    align-items: center;
    justify-content: flex-end;
    flex: none;
}
.winbtn {
    position: relative;
    display: flex;
    align-items: center;
    justify-content: center;
    width: 18px;
    height: 18px;
    color: #eee;
}
.wintitle .winbtn {
    margin-right: 15px;
}
.wintitle .close, .figtitle .close {
    width: 18px;
    border-radius: 50%;
    background: #5a5a5a;
    margin-right: 9px;
}
.min::after, .fig-min::after {
    content: "";
    width: 11px;
    height: 1px;
    background: #aaa;
    margin-top: 6px;
}
.max::after {
    content: "";
    width: 10px;
    height: 8px;
    border: 1px solid #aaa;
}
.menubar {
    height: 26px;
    background: #3c3c3c;
    color: #999;
    font-size: 14.5px;
    display: flex;
    align-items: center;
    gap: 12px;
    padding-left: 6px;
    flex: none;
}
.workbench {
    flex: 1;
    display: flex;
    min-height: 0;
}
.activitybar {
    width: 58px;
    background: #333;
    display: flex;
    flex-direction: column;
    flex: none;
}
.act {
    height: 57.800px;
    display: flex;
    align-items: center;
    justify-content: center;
    flex: none;
}
.act svg {
    width: 30px;
    height: 34px;
    fill: none;
    stroke: #858585;
    stroke-width: 1.500;
}
.act .solid {
    fill: #858585;
    stroke: none;
}
.act.on {
    border-left: 2px solid #fff;
    padding-right: 2px;
}
.act.on svg {
    stroke: #f0f0f0;
    width: 26px;
}
.act-space {
    flex: 1;
}
.sidebar {
    width: 386px;
    background: #252526;
    display: flex;
    flex-direction: column;
    flex: none;
    color: #8c8c8c;
    font-size: 15.500px;
}
.side-title {
    height: 43px;
    line-height: 42px;
    padding-left: 24px;
    font-size: 13.500px;
    color: #b0b0b0;
    flex: none;
}
.tree {
    flex: 1;
    overflow: hidden;
    min-height: 0;
}
.row {
    position: relative;
    height: 26.300px;
    display: flex;
    align-items: center;
    white-space: nowrap;
}
.chev {
    width: 16px;
    height: 16px;
    margin-right: 4px;
    color: #bbb;
    flex: none;
}
.file {
    width: 15px;
    height: 15px;
    margin-right: 8px;
    flex: none;
}
.root {
    font-weight: 700;
    font-size: 14px;
    color: #bbb;
}
.mod {
    color: #bca800;
}
.d0 { padding-left: 4px; }
.d1 { padding-left: 20px; }
.d2 { padding-left: 30px; }
.d3 { padding-left: 39px; }
.d4 { padding-left: 48px; }
.d5 { padding-left: 59px; }
.f5 { padding-left: 57px; }
.f6 { padding-left: 66px; }
.picked {
    background: #37373d;
}
.guide::before {
    content: "";
    position: absolute;
    left: 53px;
    top: 0;
    bottom: 0;
    width: 1px;
    background: #585858;
}
.outline {
    height: 27px;
    border-top: 1px solid #3f3f40;
    display: flex;
    align-items: center;
    padding-left: 4px;
    font-size: 13.500px;
    font-weight: 700;
    color: #bbb;
    flex: none;
}
.main {
    flex: 1;
    display: flex;
    flex-direction: column;
    min-width: 0;
    background: #1e1e1e;
}
.tabsrow {
    height: 42px;
    background: #252526;
    display: flex;
    align-items: center;
    justify-content: flex-end;
    padding-right: 19px;
    color: #aaa;
    flex: none;
}
.ed-ico {
    fill: none;
    stroke: #a9b7c9;
    stroke-width: 1.200;
}
.ed-small {
    margin: 0 20px 0 6px;
    color: #aaa;
}
.dots {
    margin-left: 15px;
    font-size: 18px;
    font-weight: 700;
    letter-spacing: 1px;
}
.crumbs {
    height: 26px;
    background: #1e1e1e;
    box-shadow: 0 2px 3px rgba(0, 0, 0, 0.3);
    flex: none;
}
.editor {
    flex: 1;
    position: relative;
    min-height: 0;
}
.editor::before {
    content: "";
    position: absolute;
    left: 0;
    right: 0;
    top: 284px;
    height: 22px;
    border-top: 1px solid #2c2c2c;
    border-bottom: 1px solid #2c2c2c;
}
.overview {
    position: absolute;
    right: 0;
    top: 0;
    bottom: 0;
    width: 17px;
    border-left: 1px solid #3a3a3a;
}
.overview::after {
    content: "";
    position: absolute;
    left: 0;
    right: 0;
    top: 259px;
    height: 1px;
    background: #8a8a8a;
}
.mk {
    position: absolute;
    right: 0;
    width: 6px;
    background: #c5aa00;
}
.m1 { top: 6px; height: 11px; }
.m2 { top: 39px; height: 12px; }
.m3 { top: 67px; height: 8px; }
.m4 { top: 78px; height: 14px; }
.m5 { top: 98px; height: 5px; }
.m6 { top: 119px; height: 5px; }
.m7 { top: 144px; height: 14px; }
.m8 { top: 184px; height: 12px; }
.m9 { top: 226px; height: 25px; }
.m10 { top: 262px; height: 6px; }
.m11 { top: 285px; height: 6px; }
.m12 { top: 314px; height: 6px; }
.m13 { top: 356px; height: 5px; }
.m14 { top: 365px; height: 5px; }
.panel {
    height: 447px;
    border-top: 1px solid #3f3f3f;
    display: flex;
    flex-direction: column;
    flex: none;
}
.panel-head {
    height: 41px;
    display: flex;
    align-items: center;
    justify-content: flex-end;
    padding-right: 20px;
    color: #aaa;
    flex: none;
}
.plus {
    font-size: 26px;
    font-weight: 300;
    color: #a9b7c9;
    margin-right: 6px;
}
.pd {
    margin: 0 13px 0 14px;
    font-size: 16px;
}
.up {
    transform: rotate(180deg);
    margin-right: 17px;
}
.panel-body {
    flex: 1;
    display: flex;
    min-height: 0;
}
.term {
    width: 666px;
    display: flex;
    flex-direction: column;
    justify-content: flex-end;
    padding: 0 0 4px 24px;
    font-family: "DejaVu Sans Mono", monospace;
    font-size: 16.500px;
    color: #c8c8c8;
    border-right: 1px solid #3f3f3f;
}
.tl {
    height: 20px;
    line-height: 20px;
    white-space: pre;
}
.ind {
    padding-left: 12px;
}
.cursor {
    display: block;
    width: 10px;
    height: 20px;
    border: 1px solid #c8c8c8;
}
.tmux {
    width: 666px;
    padding: 0 31px 3px 25px;
}
.tmuxbar {
    height: 21px;
    line-height: 21px;
    background: #00cc7f;
    color: #10291f;
    display: flex;
    justify-content: space-between;
}
.termlist {
    flex: 1;
    font-size: 14px;
    color: #aaa;
    border-left: 1px solid #333;
    margin-left: -1px;
}
.tt {
    position: relative;
    height: 26px;
    display: flex;
    align-items: center;
    gap: 8px;
    padding-left: 29px;
    letter-spacing: 0.5px;
    font-family: "Open Sans", sans-serif;
}
.tt svg {
    fill: none;
    stroke: #aaa;
    flex: none;
}
.tt.on {
    background: #37373d;
    color: #bbb;
}
.tree-l {
    position: absolute;
    left: 18px;
    top: 6px;
    width: 6px;
    height: 8px;
    border-left: 1px solid #bbb;
    border-bottom: 1px solid #bbb;
}
.tree-l.top {
    top: 13px;
    border-bottom: 0;
    border-top: 1px solid #bbb;
}
.statusbar {
    height: 26px;
    background: #0066cc;
    color: #e6eff9;
    font-size: 14.500px;
    display: flex;
    align-items: center;
    flex: none;
    white-space: nowrap;
}
.statusbar svg {
    width: 15px;
    height: 15px;
    fill: none;
    stroke: #e6eff9;
    stroke-width: 1;
    flex: none;
}
.statusbar .solid {
    fill: #e6eff9;
    stroke: none;
}
.remote {
    width: 253px;
    height: 100%;
    background: #008f5d;
    display: flex;
    align-items: center;
    gap: 5px;
    padding-left: 14px;
    flex: none;
}
.st {
    display: flex;
    align-items: center;
    gap: 5px;
    flex: none;
}
.st-space {
    flex: 1;
}
.s-branch { margin-left: 11px; }
.s-cloud { margin-left: 20px; }
.s-err { margin-left: 21px; }
.s-warn { margin-left: 7px; }
.s-radio { margin-left: 21px; }
.s-info { margin-left: 24px; }
.s-kit { margin-left: 10px; }
.s-build { margin-left: 23px; }
.s-all { margin-left: 25px; }
.s-run { margin-left: 89px; }
.s-ins { margin-left: 24px; }
.s-sp, .s-enc, .s-lf, .s-py, .s-ver { margin-left: 20px; }
.s-py .lang { margin-left: 2px; }
.s-fb { margin-left: 20px; }
.s-bell { margin: 0 19px 0 20px; }

/* matplotlib window */
.figure {
    position: absolute;
    left: 150px;
    top: 27px;
    width: 1601px;
    height: 971px;
    display: flex;
    flex-direction: column;
    background: #fff;
    border-radius: 6px 6px 0 0;
}
.figtitle {
    position: relative;
    height: 36px;
    background: #3f3f3f;
    color: #b8b8b8;
    border-radius: 6px 6px 0 0;
    font-size: 14.500px;
    display: flex;
    align-items: center;
    justify-content: flex-end;
    border-bottom: 1px solid #2c2c2c;
    flex: none;
}
.figtitle > span:first-child {
    position: absolute;
    left: 775px;
}
.figtitle .winbtn {
    margin-right: 15px;
}
.figtitle .close {
    margin-right: 9px;
}
.plot {
    display: block;
    flex: none;
}
.map-y {
    shape-rendering: crispEdges;
}
.robot {
    fill: none;
    stroke: #6b6b6b;
}
.robot ellipse {
    stroke-width: 1.500;
    vector-effect: non-scaling-stroke;
    opacity: 0.95;
}
.heading {
    fill: none;
    stroke: #0000ff;
    stroke-width: 1.800;
    vector-effect: non-scaling-stroke;
}
.axes {
    fill: none;
    stroke: #000;
    stroke-width: 1.300;
}
.ticks {
    stroke: #000;
    stroke-width: 1.200;
}
.ticklabels {
    font-family: "DejaVu Sans", sans-serif;
    font-size: 13.500px;
    fill: #000;
}
.xt {
    text-anchor: middle;
}
.yt {
    text-anchor: end;
}
.figbar {
    flex: 1;
    background: #d6d6d6;
    display: flex;
    align-items: center;
    padding-left: 4px;
    gap: 3px;
}
.mb {
    width: 27px;
    height: 27px;
    padding: 2px;
    background: #e9e9e9;
    border: 1px solid #f5f5f5;
    border-right-color: #aaa;
    border-bottom-color: #aaa;
    flex: none;
}
.mb svg {
    display: block;
    width: 100%;
    height: 100%;
}
.mb .k {
    fill: #000;
}
.mb-sep {
    width: 1px;
    height: 26px;
    background: #b4b4b4;
    margin: 0 5px 0 3px;
}
.coords {
    font-family: "DejaVu Sans", sans-serif;
    font-size: 11.500px;
    color: #000;
    margin-left: 1156px;
}
.coords.cy {
    margin-left: 38px;
}

/* browser */
.chrome {
    width: 1920px;
    height: 1080px;
    background: #fff;
    display: flex;
    flex-direction: column;
    flex: none;
    color: #3c4043;
    font-size: 14px;
    font-family: "Noto Sans", sans-serif;
}
.tabstrip {
    height: 33px;
    background: #dee1e6;
    display: flex;
    align-items: center;
    padding-left: 8px;
    flex: none;
}
.tab {
    position: relative;
    width: 99.400px;
    height: 33px;
    display: flex;
    align-items: center;
    padding-left: 11px;
    flex: none;
    color: #45494d;
    white-space: nowrap;
    font-size: 13.500px;
}
.tab::after {
    content: "";
    position: absolute;
    right: 0;
    top: 7px;
    bottom: 7px;
    width: 1px;
    background: #8a8d91;
}
.tab.active {
    background: #fff;
    border-radius: 9px 9px 0 0;
}
.tab.active::after {
    display: none;
}
.fav {
    width: 16px;
    height: 16px;
    flex: none;
    color: #24292e;
}
.tt-name {
    width: 40px;
    margin-left: 9px;
    overflow: hidden;
    -webkit-mask-image: linear-gradient(to right, #000 75%, transparent);
    mask-image: linear-gradient(to right, #000 75%, transparent);
}
.tx {
    width: 12px;
    height: 12px;
    margin-left: 2px;
    color: #333;
    flex: none;
}
.newtab {
    width: 44px;
    text-align: center;
    font-size: 24px;
    font-weight: 400;
    color: #3c4043;
}
.tab-space {
    flex: 1;
}
.wc {
    width: 12px;
    height: 12px;
    color: #444;
    flex: none;
}
.wc-down {
    margin-right: 31px;
}
.wc-min {
    width: 10px;
    height: 2px;
    background: #555;
    margin: 8px 23px 0 0;
}
.wc-max {
    width: 10px;
    height: 10px;
    border: 2px solid #555;
    margin-right: 23px;
}
.wc-x {
    margin-right: 12px;
}
.addrrow {
    height: 37px;
    display: flex;
    align-items: center;
    padding-left: 13px;
    flex: none;
}
.nav {
    width: 18px;
    height: 18px;
    margin-right: 14px;
    fill: none;
    stroke: #5f6368;
    stroke-width: 1.800;
    flex: none;
}
.nav.off {
    stroke: #b5b8bc;
}
.nav.sm {
    margin: 0 0 0 14px;
    stroke-width: 1.400;
}
.nav.sm:last-child {
    margin-right: 9px;
}
.omnibox {
    width: 1608px;
    height: 30px;
    border-radius: 15px;
    background: #f1f3f4;
    display: flex;
    align-items: center;
    padding-left: 13px;
    flex: none;
    margin-left: -6px;
}
.lock {
    width: 12px;
    height: 14px;
    margin-right: 9px;
}
.url {
    color: #5f6368;
    font-family: Lato, sans-serif;
    font-size: 15.100px;
    white-space: nowrap;
}
.url b {
    color: #202124;
    font-weight: 400;
}
.ext {
    width: 18px;
    height: 22px;
    margin: 0 0 0 14px;
    flex: none;
}
.ext.nav {
    stroke-width: 1.600;
}
.side {
    fill: #5f6368;
    stroke: none;
}
.grammarly {
    font-size: 12px;
    fill: #fff;
    font-family: "Liberation Sans", sans-serif;
}
.face {
    width: 24px;
    height: 24px;
    margin-left: 12px;
}
.vdots {
    width: 6px;
    height: 20px;
    fill: #5f6368;
    margin-left: 13px;
}
.bookmarks {
    height: 34px;
    display: flex;
    align-items: center;
    gap: 16px;
    padding: 0 16px 0 13px;
    border-bottom: 1px solid #dadce0;
    flex: none;
}
.bm {
    display: flex;
    align-items: center;
    gap: 8px;
    color: #3c4043;
    white-space: nowrap;
}
.bm-more {
    font-size: 14px;
    color: #5f6368;
}
.sheets {
    flex: 1;
    display: flex;
    flex-direction: column;
    background: #f9fbfd;
    min-height: 0;
    font-family: Roboto, sans-serif;
}
.docbar {
    height: 66px;
    display: flex;
    align-items: flex-start;
    padding: 17px 0 0 21px;
    flex: none;
}
.docicon {
    width: 26px;
    height: 34px;
    flex: none;
}
.docinfo {
    margin-left: 14px;
    margin-top: -6px;
}
.docname {
    display: flex;
    align-items: center;
    height: 26px;
}
.doctitle {
    font-size: 18px;
    color: #1f1f1f;
    margin-right: 21px;
}
.di {
    width: 18px;
    height: 18px;
    margin-right: 15px;
    fill: none;
    stroke: #444746;
    stroke-width: 1.300;
}
.docmenu {
    display: flex;
    gap: 15px;
    font-size: 14px;
    color: #1f1f1f;
    margin-top: 5px;
    padding-left: 1px;
}
.hd {
    width: 24px;
    height: 24px;
    margin: 1px 25px 0 0;
    fill: none;
    stroke: #444746;
    stroke-width: 1.800;
    flex: none;
}
.hd.meet {
    margin-right: 5px;
}
.caret-g {
    width: 0;
    height: 0;
    border: 4px solid transparent;
    border-top: 5px solid #444746;
    border-bottom: 0;
}
.caret-g.faint {
    border-top-color: #bbb;
}
.mc {
    margin: 11px 22px 0 0;
}
.share {
    width: 107px;
    height: 40px;
    margin-top: -6px;
    border-radius: 20px;
    background: #c2e7ff;
    color: #001d35;
    font-weight: 500;
    font-size: 14px;
    display: flex;
    align-items: center;
    justify-content: center;
    gap: 11px;
    flex: none;
}
.avatar {
    width: 32px;
    height: 32px;
    margin: -2px 19px 0 21px;
    border-radius: 50%;
    background: #0097a7;
    color: #fff;
    font-size: 18px;
    text-align: center;
    line-height: 32px;
    flex: none;
}
.toolbar {
    height: 40px;
    margin: 0 17px 0 15px;
    border-radius: 20px;
    background: #edf2fa;
    display: flex;
    align-items: center;
    padding: 0 12px 0 11px;
    flex: none;
    font-size: 13.500px;
    color: #444746;
}
.tb {
    width: 32px;
    height: 26px;
    display: flex;
    align-items: center;
    justify-content: center;
    flex: none;
    white-space: nowrap;
}
.tb svg {
    width: 18px;
    height: 18px;
    fill: none;
    stroke: #444746;
    stroke-width: 1.400;
}
.tb .solid {
    fill: #444746;
    stroke: none;
}
.w52 { width: 52px; }
.w20 { width: 20px; }
.w26 { width: 26px; }
.w44 { width: 44px; }
.w22 { width: 22px; }
.w61 { width: 61px; justify-content: flex-start; }
.w30 { width: 30px; }
.w12 { width: 12px; }
.w8 { width: 8px; }
.ml2 { margin-left: 2px; }
.ml3 { margin-left: 3px; }
.ml4 { margin-left: 4px; }
.ml5 { margin-left: 5px; }
.dec {
    font-size: 12.500px;
}
.dec sub {
    font-size: 9px;
    margin-top: 10px;
    width: 0;
    vertical-align: baseline;
}
.bold {
    font-weight: 700;
}
.big {
    font-size: 20px;
}
.fmt {
    font-size: 15px;
}
.ital {
    font-style: italic;
}
.sep {
    width: 1px;
    height: 20px;
    background: #c7c7c7;
    flex: none;
}
.s0 { margin: 0; }
.s1 { margin: 0 3px 0 8px; }
.s2 { margin: 0 14px 0 10px; }
.s3 { margin: 0 0 0 9px; }
.s4 { margin: 0 0 0 5px; }
.s5 { margin: 0 0 0 5px; }
.s6 { margin: 0 0 0 6px; }
.fontsize {
    width: 32px;
    height: 24px;
    margin-left: 2px;
    border: 1px solid #747775;
    border-radius: 4px;
    text-align: center;
    line-height: 22px;
    flex: none;
}
.color {
    flex-direction: column;
    line-height: 14px;
    gap: 1px;
}
.color svg {
    height: 14px;
}
.bar {
    width: 22px;
    height: 4px;
}
.bar.black { background: #000; }
.bar.white { background: #fff; }
.bar.thin {
    width: 14px;
    height: 2px;
    background: #444746;
}
.dim svg {
    stroke: #a8abad;
}
.formula {
    height: 29px;
    margin-top: 8px;
    background: #fff;
    display: flex;
    align-items: center;
    padding-left: 14px;
    flex: none;
    font-family: "Liberation Sans", sans-serif;
    font-size: 13.300px;
    color: #1f1f1f;
    border-bottom: 1px solid #c4c7c5;
}
.namebox {
    width: 72px;
}
.fx-sep {
    width: 1px;
    height: 20px;
    margin-left: 12px;
    background: #c7c7c7;
}
.fx {
    margin-left: 11px;
    font-family: "Liberation Serif", serif;
    font-style: italic;
    font-size: 17px;
    color: #888;
}
.fx-val {
    margin-left: 10px;
}
.gridwrap {
    height: 783px;
    background: #fff;
    overflow: hidden;
    flex: none;
}
.grid {
    table-layout: fixed;
    width: 1913px;
    border-collapse: collapse;
    font-family: "Liberation Sans", sans-serif;
    font-size: 13.300px;
    color: #000;
}
.grid col {
    width: 101px;
    border-right: 1px solid #e1e1e1;
}
.grid col.c-h { width: 46px; }
.grid col.c-a { width: 100px; }
.grid col.c-g { width: 130px; }
.grid col.c-gh { width: 122px; }
.grid tr {
    height: 21px;
    border-bottom: 1px solid #e1e1e1;
}
.grid tr.tall {
    height: 23px;
}
.grid tr.colhead {
    height: 23px;
}
.grid td {
    padding: 0;
    text-align: center;
    white-space: nowrap;
    overflow: hidden;
}
.grid td.cur {
    position: relative;
    overflow: visible;
    outline: 2px solid #1a56e8;
    outline-offset: -1px;
}
.grid td.cur::after {
    content: "";
    position: absolute;
    right: -4px;
    bottom: -4px;
    width: 7px;
    height: 7px;
    border-radius: 50%;
    background: #1a3ae0;
}
.grid th {
    padding: 0;
    font-weight: 400;
    font-size: 12px;
    color: #444;
    background: #fff;
    border-right: 1px solid #c4c7c5;
    border-bottom: 1px solid #c4c7c5;
}
.grid .colhead th {
    border-top: 1px solid #c4c7c5;
}
.grid th.corner {
    background: #f5f5f5;
    box-shadow: inset -4px -4px 0 #c4c4c4;
}
.grid th.hl {
    background: #d3e3fd;
    color: #0b1f44;
    font-weight: 700;
}
.hscroll {
    height: 13px;
    padding: 2px 0 1px 47px;
    background: #f8f8f8;
    border-bottom: 1px solid #e1e3e1;
    flex: none;
}
.thumb {
    display: block;
    height: 10px;
    border-radius: 5px;
    background: #dadce0;
}
.sheetbar {
    flex: 1;
    display: flex;
    align-items: center;
    padding-left: 53px;
}
.sb-plus {
    font-size: 22px;
    color: #5f6368;
    width: 16px;
    text-align: center;
}
.sb-all {
    width: 16px;
    height: 14px;
    margin-left: 25px;
    fill: none;
    stroke: #5f6368;
    stroke-width: 2;
}
.sheettab {
    width: 91px;
    height: 100%;
    margin-left: 24px;
    background: #e1e6f7;
    color: #1a3fd6;
    font-weight: 500;
    display: flex;
    align-items: center;
    gap: 10px;
    padding-left: 12px;
}
.caret-b {
    width: 0;
    height: 0;
    border: 4px solid transparent;
    border-top: 5px solid #1a3fd6;
    border-bottom: 0;
}
.explore {
    display: flex;
    align-items: center;
    gap: 12px;
    margin-right: 78px;
    font-size: 13px;
    color: #444746;
}
```
